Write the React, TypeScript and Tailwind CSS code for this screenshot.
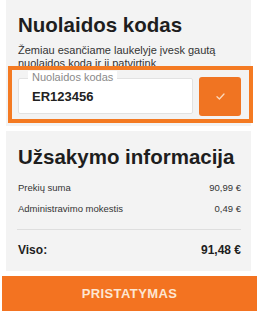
import React from 'react'

const App: React.FC = () => {
  return (
    <div className="w-[257px] h-[313px] bg-white overflow-hidden font-['Liberation_Sans',Arial,sans-serif] text-[#222]">
      {/* Discount code panel */}
      <div className="mx-[6px] bg-[#f3f3f3] pt-[13px] pb-[3px] pl-[12px] pr-[10px]">
        <h2 className="text-[20.5px] leading-[24px] font-bold text-[#1e1e1e]">Nuolaidos kodas</h2>
        <p className="mt-[7px] text-[11px] leading-[13px] text-[#333] pr-[20px]">
          Žemiau esančiame laukelyje įvesk gautą nuolaidos kodą ir jį patvirtink
        </p>

        {/* Highlighted input box */}
        <div className="relative -mt-[4px] ml-[-10px] mr-[-12px] h-[57px] border-[4px] border-[#f47a22] bg-[#f3f3f3] flex items-start pl-[6px] pr-[7px] pt-[7px] gap-[6px]">
          <div className="relative mt-[1px] w-[175px] h-[36px] bg-white border border-[#e2e2e2] rounded-[2px] flex items-center pl-[13px]">
            <span className="absolute -top-[8px] left-[9px] bg-white px-[4px] text-[11px] leading-[13px] text-[#8a8a8a]">
              Nuolaidos kodas
            </span>
            <span className="mt-[2px] text-[13px] font-bold text-[#222]">ER123456</span>
          </div>
          <button className="w-[42px] h-[39px] bg-[#f07422] rounded-[3px] flex items-center justify-center">
            <svg width="9" height="7" viewBox="0 0 9 7" fill="none">
              <polyline points="1,3.8 3.4,6 8,1" stroke="#fbd9bd" strokeWidth="1.3" strokeLinecap="round" strokeLinejoin="round" />
            </svg>
          </button>
        </div>
      </div>

      {/* Order summary panel */}
      <div className="mt-[5px] mx-[6px] bg-[#f3f3f3] pt-[14px] pb-[14px] pl-[12px] pr-[10px]">
        <h2 className="text-[20.5px] leading-[24px] font-bold text-[#1e1e1e]">Užsakymo informacija</h2>
        <div className="mt-[13px] flex justify-between text-[9.5px] leading-[12px] text-[#333]">
          <span>Prekių suma</span>
          <span>90,99 €</span>
        </div>
        <div className="mt-[9px] flex justify-between text-[9.5px] leading-[12px] text-[#333]">
          <span>Administravimo mokestis</span>
          <span>0,49 €</span>
        </div>
        <div className="mt-[14px] ml-[-1px] h-px bg-[#dedede]"></div>
        <div className="mt-[13px] flex justify-between text-[12px] leading-[14px] font-bold text-[#1e1e1e]">
          <span>Viso:</span>
          <span>91,48 €</span>
        </div>
      </div>

      {/* Delivery button */}
      <button className="mt-[5px] ml-[2px] w-[255px] h-[35px] bg-[#f37321] flex items-center justify-center text-[13px] font-bold tracking-[0.4px] text-[#fde6d2]">
        PRISTATYMAS
      </button>
    </div>
  )
}

export default App
